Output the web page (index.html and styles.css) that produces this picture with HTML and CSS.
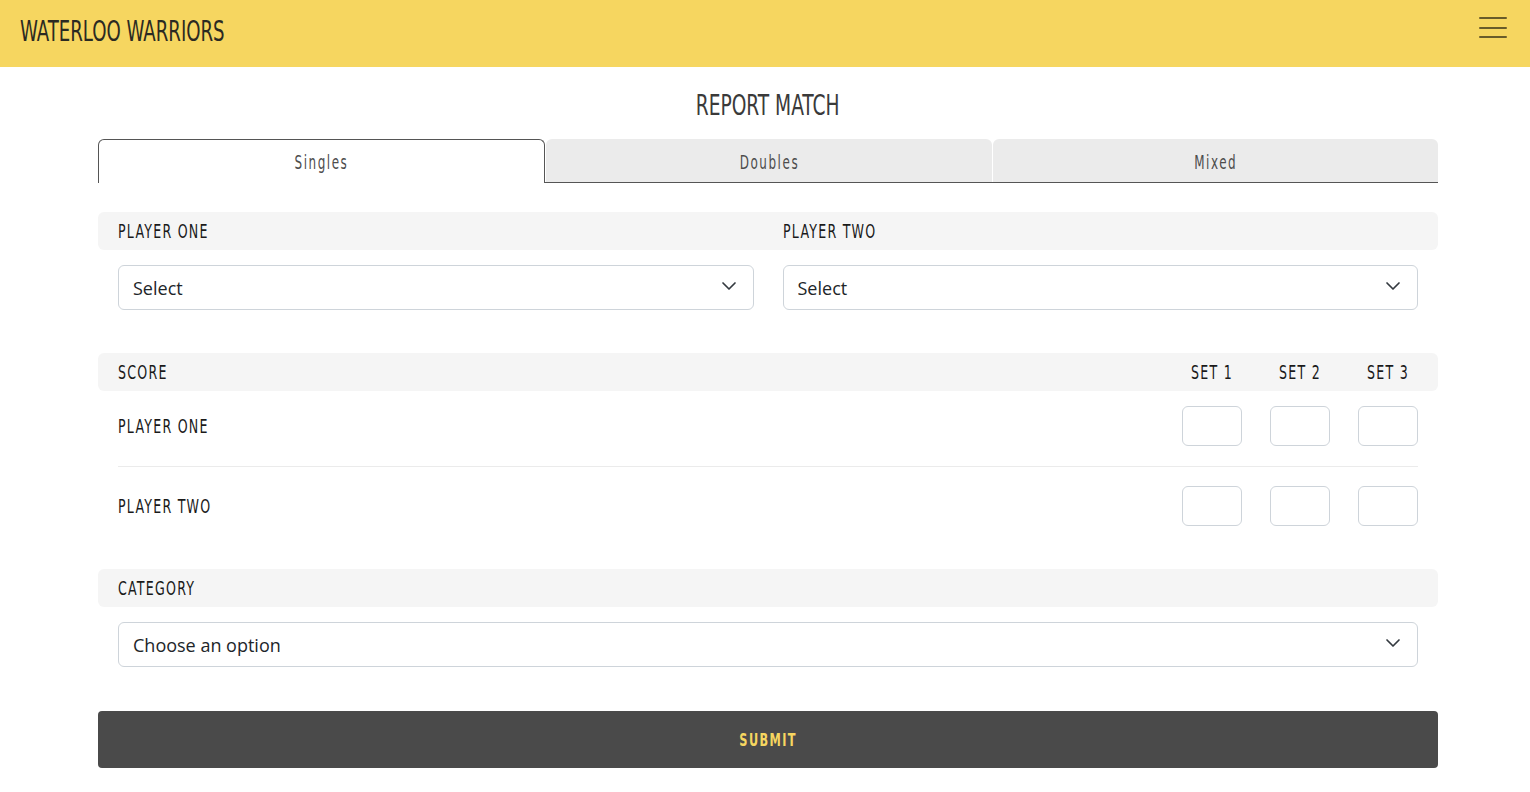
FILE: index.html
```html
<!DOCTYPE html>
<html lang="en">
<head>
<meta charset="utf-8">
<title>Waterloo Warriors - Report Match</title>
<link rel="stylesheet" href="styles.css">
</head>
<body>
<header class="topbar">
  <div class="brand"><span class="cond left">WATERLOO WARRIORS</span></div>
  <button class="menu-btn" aria-label="Menu">
    <span class="bar"></span><span class="bar"></span><span class="bar"></span>
  </button>
</header>

<main class="page">
  <h1 class="page-title"><span class="cond">REPORT MATCH</span></h1>

  <nav class="tabs">
    <div class="tab active"><span class="cond">Singles</span></div>
    <div class="tab"><span class="cond">Doubles</span></div>
    <div class="tab"><span class="cond">Mixed</span></div>
  </nav>

  <section class="section players">
    <div class="section-head two-col">
      <span class="label"><span class="cond left">PLAYER ONE</span></span>
      <span class="label"><span class="cond left">PLAYER TWO</span></span>
    </div>
    <div class="section-body two-col">
      <div class="select-wrap">
        <select class="select"><option>Select</option></select>
        <svg class="chev" viewBox="0 0 16 16" width="16" height="16"><path d="M2 5l6 6 6-6" fill="none" stroke="#343a40" stroke-width="1.7" stroke-linecap="round" stroke-linejoin="round"/></svg>
      </div>
      <div class="select-wrap">
        <select class="select"><option>Select</option></select>
        <svg class="chev" viewBox="0 0 16 16" width="16" height="16"><path d="M2 5l6 6 6-6" fill="none" stroke="#343a40" stroke-width="1.7" stroke-linecap="round" stroke-linejoin="round"/></svg>
      </div>
    </div>
  </section>

  <section class="section score">
    <div class="section-head score-grid">
      <span class="label"><span class="cond left">SCORE</span></span>
      <span class="label set"><span class="cond">SET 1</span></span>
      <span class="label set"><span class="cond">SET 2</span></span>
      <span class="label set"><span class="cond">SET 3</span></span>
    </div>
    <div class="section-body score-body">
      <div class="score-row score-grid first">
        <span class="label"><span class="cond left">PLAYER ONE</span></span>
        <input class="set-input" type="text">
        <input class="set-input" type="text">
        <input class="set-input" type="text">
      </div>
      <div class="score-row score-grid second">
        <span class="label"><span class="cond left">PLAYER TWO</span></span>
        <input class="set-input" type="text">
        <input class="set-input" type="text">
        <input class="set-input" type="text">
      </div>
    </div>
  </section>

  <section class="section category">
    <div class="section-head">
      <span class="label"><span class="cond left">CATEGORY</span></span>
    </div>
    <div class="section-body">
      <div class="select-wrap">
        <select class="select"><option>Choose an option</option></select>
        <svg class="chev" viewBox="0 0 16 16" width="16" height="16"><path d="M2 5l6 6 6-6" fill="none" stroke="#343a40" stroke-width="1.7" stroke-linecap="round" stroke-linejoin="round"/></svg>
      </div>
    </div>
  </section>

  <button class="submit" type="button"><span class="cond">SUBMIT</span></button>
</main>
</body>
</html>
```

FILE: styles.css
```css
* { box-sizing: border-box; }

html, body {
  margin: 0;
  padding: 0;
  background: #ffffff;
}

body {
  font-family: "DejaVu Sans Condensed", "DejaVu Sans", "Liberation Sans", sans-serif;
  color: #212529;
}

/* narrow display face: DejaVu condensed squeezed horizontally */
.cond {
  display: inline-block;
  white-space: nowrap;
  transform: scaleX(0.7);
  transform-origin: center center;
}

.cond.left {
  transform-origin: left center;
}

.topbar {
  height: 67px;
  background: #f6d660;
  display: flex;
  align-items: center;
  justify-content: space-between;
  padding: 0 23px 0 20px;
}

.brand {
  font-size: 29px;
  line-height: 34px;
  color: #2b2a22;
  margin-top: -6px;
}

.brand .cond {
  transform: scaleX(0.695);
}

.menu-btn {
  width: 28px;
  height: 21px;
  padding: 0;
  border: 0;
  background: transparent;
  display: flex;
  flex-direction: column;
  justify-content: space-between;
  margin-top: -12px;
}

.menu-btn .bar {
  display: block;
  height: 2px;
  width: 28px;
  background: rgba(45, 40, 20, 0.7);
  border-radius: 1px;
}

.page {
  width: 1340px;
  margin: 0 0 0 98px;
  padding-bottom: 24px;
}

.page-title {
  margin: 0;
  padding: 22px 0 18px;
  text-align: center;
  font-weight: normal;
  font-size: 29px;
  line-height: 32px;
  color: #3a3a3a;
}

.page-title .cond {
  transform: scaleX(0.715);
}

.tabs {
  display: flex;
  gap: 1px;
  height: 44px;
  border-bottom: 1px solid #555555;
  align-items: stretch;
}

.tab {
  flex: 1;
  display: flex;
  align-items: center;
  justify-content: center;
  background: #ebebeb;
  border-radius: 6px 6px 0 0;
  font-size: 19px;
  letter-spacing: 2.2px;
  color: #4d4d4d;
  padding-top: 2px;
}

.tab.active {
  background: #ffffff;
  border: 1px solid #555555;
  border-bottom: 0;
  margin-bottom: -1px;
  padding-bottom: 1px;
}

.section-head {
  height: 38px;
  background: #f5f5f5;
  border-radius: 6px;
  padding: 0 20px;
  display: flex;
  align-items: center;
}

.label {
  font-size: 20px;
  letter-spacing: 1.8px;
  color: #1a1a1a;
  line-height: 24px;
}

.two-col {
  display: grid;
  grid-template-columns: 1fr 1fr;
  column-gap: 29px;
}

.section-body {
  padding: 15px 20px 0;
}

.players { margin-top: 29px; }
.score { margin-top: 43px; }
.category { margin-top: 43px; }

.select-wrap {
  position: relative;
}

.select {
  appearance: none;
  -webkit-appearance: none;
  width: 100%;
  height: 45px;
  padding: 0 40px 0 14px;
  border: 1px solid #ced4da;
  border-radius: 6px;
  background: #ffffff;
  font-family: "Open Sans", "Noto Sans", sans-serif;
  font-size: 18px;
  color: #212529;
  outline: none;
}

.chev {
  position: absolute;
  right: 17px;
  top: 13px;
  width: 16px;
  height: 16px;
  pointer-events: none;
}

.score-grid {
  display: grid;
  grid-template-columns: 1fr 60px 60px 60px;
  column-gap: 28px;
  align-items: center;
}

.set {
  text-align: center;
}

.score-body {
  padding-top: 0;
}

.score-row.first {
  padding: 15px 0 20px;
  border-bottom: 1px solid #ebebeb;
}

.score-row.second {
  padding: 19px 0 0;
}

.set-input {
  width: 60px;
  height: 40px;
  border: 1px solid #ced4da;
  border-radius: 6px;
  background: #ffffff;
  outline: none;
}

.submit {
  display: flex;
  align-items: center;
  justify-content: center;
  width: 100%;
  height: 57px;
  margin-top: 44px;
  border: 0;
  border-radius: 4px;
  background: #4a4a4a;
  color: #f6d660;
  font-family: inherit;
  font-weight: bold;
  font-size: 18px;
  letter-spacing: 2px;
}
```
